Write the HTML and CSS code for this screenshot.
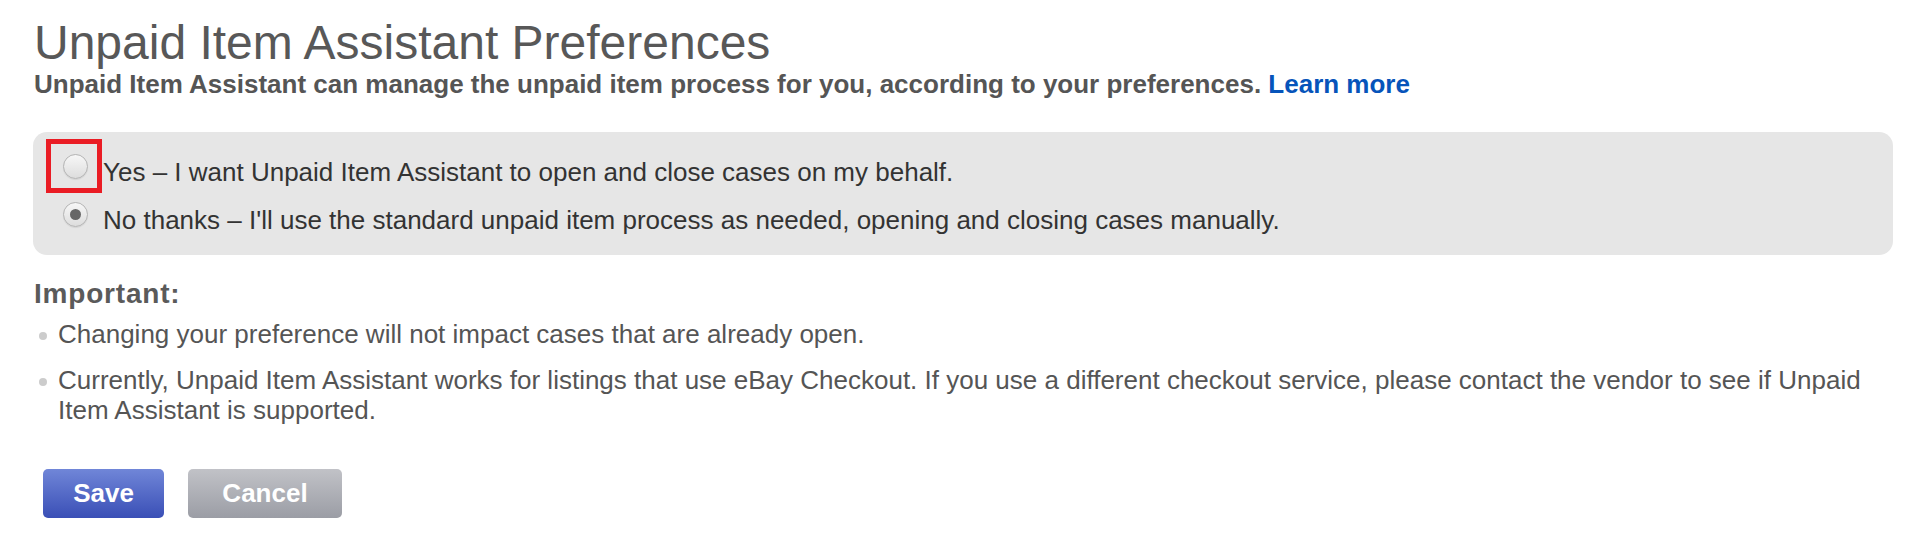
FILE: index.html
```html
<!DOCTYPE html>
<html lang="en">
<head>
<meta charset="utf-8">
<title>Unpaid Item Assistant Preferences</title>
<link rel="stylesheet" href="styles.css">
</head>
<body>
<main class="page">
  <header class="page-head">
    <h1 class="title">Unpaid Item Assistant Preferences</h1>
    <p class="subtitle">Unpaid Item Assistant can manage the unpaid item process for you, according to your preferences. <a class="link" href="#">Learn more</a></p>
  </header>

  <form class="prefs">
    <fieldset class="choice-box">
      <label class="choice choice-first">
        <span class="radio-cell highlight"><input class="radio" type="radio" name="uia" value="yes"></span>
        <span class="choice-text">Yes – I want Unpaid Item Assistant to open and close cases on my behalf.</span>
      </label>
      <label class="choice choice-second">
        <span class="radio-cell"><input class="radio" type="radio" name="uia" value="no" checked></span>
        <span class="choice-text">No thanks – I'll use the standard unpaid item process as needed, opening and closing cases manually.</span>
      </label>
    </fieldset>

    <section class="notes">
      <h2 class="notes-title">Important:</h2>
      <ul class="notes-list">
        <li>Changing your preference will not impact cases that are already open.</li>
        <li>Currently, Unpaid Item Assistant works for listings that use eBay Checkout. If you use a different checkout service, please contact the vendor to see if Unpaid Item Assistant is supported.</li>
      </ul>
    </section>

    <div class="actions">
      <button type="button" class="btn btn-primary">Save</button>
      <button type="button" class="btn btn-secondary">Cancel</button>
    </div>
  </form>
</main>
</body>
</html>
```

FILE: styles.css
```css
* { box-sizing: border-box; }

html, body {
  margin: 0;
  padding: 0;
  background: #ffffff;
}

body {
  font-family: "Liberation Sans", Arial, Helvetica, sans-serif;
  color: #555555;
}

.page {
  width: 1893px;
  padding: 17px 0 0 34px;
}

.title {
  margin: 0;
  font-size: 48px;
  font-weight: normal;
  line-height: 52px;
  color: #585858;
}

.subtitle {
  margin: 0;
  font-size: 26px;
  font-weight: bold;
  line-height: 30px;
  color: #555555;
}

.link {
  color: #0654ba;
  text-decoration: none;
}

.prefs {
  margin: 0;
}

.choice-box {
  margin: 33px 0 0 -1px;
  padding: 7px 0 20px 13px;
  border: 0;
  border-radius: 14px;
  background: #e6e6e6;
  display: flex;
  flex-direction: column;
  min-width: 0;
}

.choice {
  display: flex;
  align-items: center;
  font-size: 26px;
  line-height: 30px;
  color: #333333;
  cursor: pointer;
}

.choice-first {
  height: 54px;
}

.choice-second {
  height: 42px;
}

.radio-cell {
  width: 56px;
  height: 54px;
  display: flex;
  align-items: center;
  justify-content: center;
  flex: none;
}

.radio-cell.highlight {
  border: 5px solid #ea1c24;
}

.radio {
  appearance: none;
  -webkit-appearance: none;
  width: 25px;
  height: 25px;
  margin: 0 0 0 3px;
  border-radius: 50%;
  border: 1px solid #b4b4b4;
  background: linear-gradient(#f7f7f7, #dddddd);
  box-shadow: 0 1px 1px rgba(0, 0, 0, 0.08);
  position: relative;
  cursor: pointer;
}

.radio:checked::after {
  content: "";
  position: absolute;
  left: 50%;
  top: 50%;
  width: 11px;
  height: 11px;
  margin: -5.5px 0 0 -5.5px;
  border-radius: 50%;
  background: #666666;
}

.choice-text {
  padding: 11px 0 0 1px;
}

.notes {
  margin-top: 24px;
}

.notes-title {
  margin: 0;
  font-size: 28px;
  font-weight: bold;
  line-height: 30px;
  letter-spacing: 0.8px;
  color: #5a5a5a;
}

.notes-list {
  list-style: none;
  margin: 10px 0 0;
  padding: 0 0 0 24px;
  font-size: 26px;
  line-height: 30px;
  color: #555555;
}

.notes-list li {
  position: relative;
}

.notes-list li + li {
  margin-top: 16px;
}

.notes-list li::before {
  content: "";
  position: absolute;
  left: -19px;
  top: 13px;
  width: 8px;
  height: 8px;
  border-radius: 50%;
  background: #cccccc;
}

.actions {
  display: flex;
  gap: 24px;
  margin: 44px 0 0 9px;
}

.btn {
  height: 49px;
  border: 0;
  border-radius: 5px;
  font-family: "Liberation Sans", Arial, Helvetica, sans-serif;
  font-size: 26px;
  font-weight: bold;
  color: #ffffff;
  cursor: pointer;
  padding: 0;
}

.btn-primary {
  width: 121px;
  background: linear-gradient(#7086d8, #3a4fb6);
}

.btn-secondary {
  width: 154px;
  background: linear-gradient(#c1c2c7, #9b9da5);
}
```
